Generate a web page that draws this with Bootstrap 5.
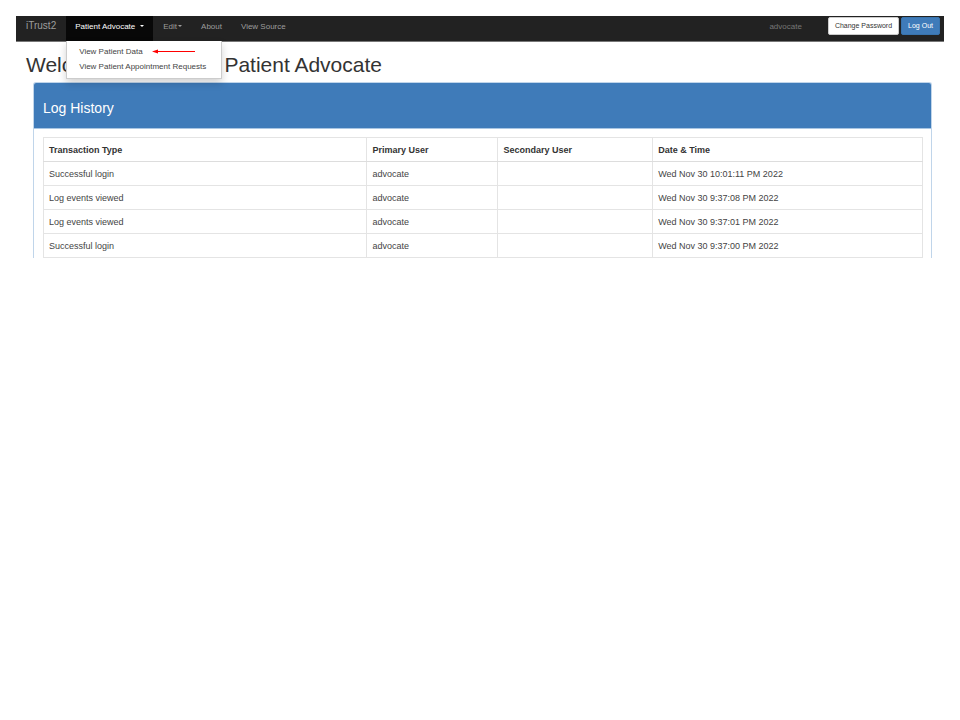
<!DOCTYPE html>
<html lang="en">
<head>
<meta charset="utf-8">
<meta name="viewport" content="width=device-width, initial-scale=1">
<title>iTrust2 - Patient Advocate</title>
<link href="https://cdn.jsdelivr.net/npm/bootstrap@5.3.0/dist/css/bootstrap.min.css" rel="stylesheet">
<style>
body { font-family: "Liberation Sans", Arial, sans-serif; font-size: 9px; line-height: 12px; color: #444; background: #fff; }
.site-nav { --bs-navbar-nav-link-padding-x: 9px; background: #222; border-bottom: 1px solid #777; font-size: 8px; line-height: 20px; padding: 0 4px 0 0; }
.site-nav .navbar-brand { color: #9d9d9d; font-size: 10px; line-height: 20px; margin: 0; padding: 0 10px 4px; }
.site-nav .navbar-nav { gap: 1px; }
.site-nav .nav-link { color: #9d9d9d; font-size: 8px; line-height: 20px; padding-top: 1px; padding-bottom: 4px; }
.site-nav .nav-link.active { color: #fff; background: #080808; }
.site-nav .dropdown-toggle::after { margin-left: 5px; border-width: 2px; border-bottom: 0; vertical-align: 2px; }
.site-nav .caret-near::after { margin-left: 1px; }
.site-nav .dropdown-menu { top: 100%; left: 0; min-width: 0; margin: 0; padding: 3px 0 4px; border: 1px solid #ccc; border-top: 0; border-radius: 0; box-shadow: 0 4px 8px rgba(0,0,0,.18); }
.site-nav .dropdown-item { font-size: 8px; line-height: 15px; padding: 0 15px 0 12px; color: #444; }
.arrow-mark { width: 44px; height: 7px; margin-left: 9px; }
.user-name { color: #777; padding: 1px 26px 0 0; font-size: 8px; }
.nav-actions { gap: 2px; }
.site-nav .btn { font-size: 7px; line-height: 16px; padding: 0 6px; border-radius: 2px; margin-top: 1px; }
.btn-pass { background: #fff; border-color: #ccc; color: #333; }
.btn-out, .btn-out:hover { background: #3f7bb9; border-color: #3873ad; color: #fff; }
.page-title { font-size: 21px; line-height: 24px; color: #333; margin: 11px 0 5px; padding-left: 10px; }
.log-panel { margin: 0 12px 0 17px; border: 1px solid #c0d5ea; border-bottom: 0; border-radius: 3px 3px 0 0; }
.log-head { background: #3f7bb9; color: #fff; padding: 16px 9px 10px; border-bottom: 1px solid #a9c6e3; border-radius: 2px 2px 0 0; }
.log-head h2 { font-size: 14px; line-height: 19px; }
.log-body { padding: 8px 8px 0 9px; }
.log-table { table-layout: fixed; color: #444; border-color: #e4e4e4; }
.log-table th, .log-table td { height: 24px; padding: 0 5px; line-height: 12px; vertical-align: middle; }
.log-table th { color: #333; }
.log-table thead th { border-bottom: 1px solid #ddd; }
.col-type { width: 36.8%; }
.col-primary { width: 14.9%; }
.col-second { width: 17.6%; }
</style>
<script src="https://cdn.jsdelivr.net/npm/bootstrap@5.3.0/dist/js/bootstrap.bundle.min.js"></script>
</head>
<body class="p-3">
<nav class="site-nav navbar navbar-expand d-flex align-items-start">
  <a class="navbar-brand" href="#">iTrust2</a>
  <ul class="navbar-nav me-auto">
    <li class="nav-item dropdown">
      <a class="nav-link active dropdown-toggle" href="#" role="button" aria-expanded="true">Patient Advocate</a>
      <ul class="dropdown-menu show">
        <li><a class="dropdown-item d-flex align-items-center" href="#">View Patient Data
          <svg class="arrow-mark" viewBox="0 0 44 7" aria-hidden="true"><path d="M5 3.5H43" stroke="#f00" stroke-width="1"/><path d="M0 3.5L6 1.5V5.5Z" fill="#f00"/></svg></a></li>
        <li><a class="dropdown-item" href="#">View Patient Appointment Requests</a></li>
      </ul>
    </li>
    <li class="nav-item"><a class="nav-link dropdown-toggle caret-near" href="#" role="button">Edit</a></li>
    <li class="nav-item"><a class="nav-link" href="#">About</a></li>
    <li class="nav-item"><a class="nav-link" href="#">View Source</a></li>
  </ul>
  <span class="user-name">advocate</span>
  <div class="nav-actions d-flex">
    <button type="button" class="btn btn-pass">Change Password</button>
    <button type="button" class="btn btn-out">Log Out</button>
  </div>
</nav>
<main>
  <h1 class="page-title fw-normal">Welcome to iTrust2 - Patient Advocate</h1>
  <section class="log-panel">
    <div class="log-head"><h2 class="fw-normal mb-0">Log History</h2></div>
    <div class="log-body">
      <table class="table table-bordered log-table mb-0">
        <thead>
          <tr><th class="col-type" scope="col">Transaction Type</th><th class="col-primary" scope="col">Primary User</th><th class="col-second" scope="col">Secondary User</th><th scope="col">Date &amp; Time</th></tr>
        </thead>
        <tbody>
          <tr><td>Successful login</td><td>advocate</td><td></td><td>Wed Nov 30 10:01:11 PM 2022</td></tr>
          <tr><td>Log events viewed</td><td>advocate</td><td></td><td>Wed Nov 30 9:37:08 PM 2022</td></tr>
          <tr><td>Log events viewed</td><td>advocate</td><td></td><td>Wed Nov 30 9:37:01 PM 2022</td></tr>
          <tr><td>Successful login</td><td>advocate</td><td></td><td>Wed Nov 30 9:37:00 PM 2022</td></tr>
        </tbody>
      </table>
    </div>
  </section>
</main>
</body>
</html>
